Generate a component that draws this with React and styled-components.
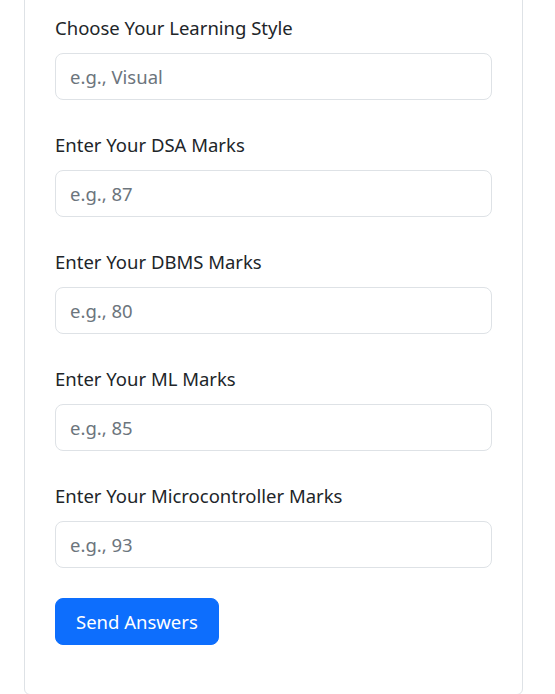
import React from 'react'
import styled, { createGlobalStyle } from 'styled-components';

// page reset, the card is scrolled so its top edge sits above the window
const GlobalStyle = createGlobalStyle`
  html, body {
    margin: 0;
    padding: 0;
    background: #ffffff;
  }
  body {
    font-family: "Segoe UI", "Noto Sans", "Liberation Sans", sans-serif;
    color: #212529;
  }
`

const Card = styled.div`
  box-sizing: border-box;
  width: 499px;
  margin: -18px 0 0 24px;
  padding: 31px 30px 49px;
  border: 1px solid #dee2e6;
  border-radius: 6px;
  background: #fff;
`

const Form = styled.form`
  display: flex;
  flex-direction: column;
`

const Field = styled.div`
  display: flex;
  flex-direction: column;
  margin-bottom: 31px;
`

const Label = styled.label`
  font-size: 18.5px;
  line-height: 28px;
  margin-bottom: 11px;
  color: #212529;
`

const Input = styled.input`
  box-sizing: border-box;
  width: 100%;
  height: 47px;
  padding: 0 16px 0 14px;
  font-family: inherit;
  font-size: 18.5px;
  color: #212529;
  border: 1px solid #dee2e6;
  border-radius: 8px;
  outline: none;
  &::placeholder {
    color: #6c757d;
  }
`

const SubmitButton = styled.button`
  align-self: flex-start;
  box-sizing: border-box;
  height: 47px;
  padding: 0 20px;
  margin-top: -1px;
  font-family: inherit;
  font-size: 18.5px;
  color: #fff;
  background: #0d6efd;
  border: 1px solid #0d6efd;
  border-radius: 8px;
  cursor: pointer;
`

const fields = [
  { label: 'Choose Your Learning Style', placeholder: 'e.g., Visual' },
  { label: 'Enter Your DSA Marks', placeholder: 'e.g., 87' },
  { label: 'Enter Your DBMS Marks', placeholder: 'e.g., 80' },
  { label: 'Enter Your ML Marks', placeholder: 'e.g., 85' },
  { label: 'Enter Your Microcontroller Marks', placeholder: 'e.g., 93' },
]

const App = () => {
  return (
    <>
      <GlobalStyle />
      <Card>
        <Form onSubmit={e => e.preventDefault()}>
          {fields.map((f, i) => (
            <Field key={i}>
              <Label htmlFor={'field' + i}>{f.label}</Label>
              <Input id={'field' + i} type="text" placeholder={f.placeholder} />
            </Field>
          ))}
          <SubmitButton type="submit">Send Answers</SubmitButton>
        </Form>
      </Card>
    </>
  )
}

export default App;
